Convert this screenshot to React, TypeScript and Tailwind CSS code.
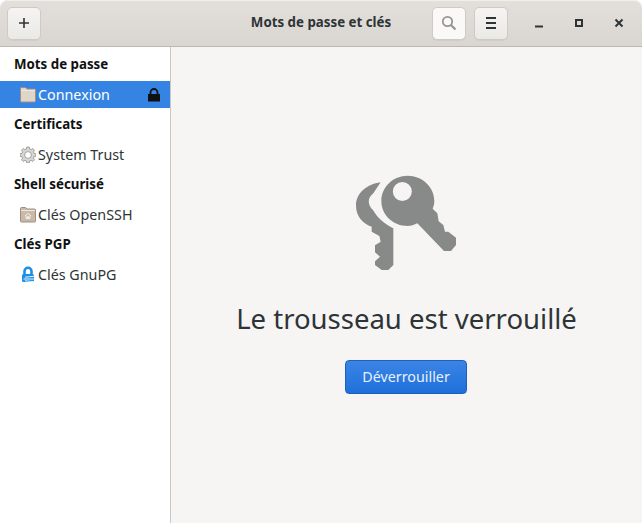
import React from 'react';

const FONT = "font-['Noto_Sans',sans-serif]";

const FolderIcon: React.FC<{ home?: boolean; dark?: boolean }> = ({ home, dark }) => (
  <svg width="16" height="17" viewBox="0 0 16 17" className="shrink-0">
    <path d="M.5 2.500a1 1 0 0 1 1-1h4l1.500 1.500h7.500a1 1 0 0 1 1 1v11a1 1 0 0 1-1 1h-13a1 1 0 0 1-1-1z" fill={dark ? '#c9b9a8' : '#dfd5c9'} stroke="#a08f80" />
    <path d="M1 4.500h14" stroke="#f0e9e0" strokeWidth="1" />
    {home && <path d="M5 10l3-2.600L11 10M6 9.500v3h4v-3M7.500 12.500v-2h1v2" fill="none" stroke="#f3eee8" strokeWidth="1" />}
  </svg>
);

const GearIcon = () => (
  <svg width="16" height="17" viewBox="0 0 16 17" className="shrink-0">
    <path
      d="M6.800 1h2.400l.4 2 1.500.6 1.700-1.100 1.700 1.700-1.100 1.700.6 1.500 2 .4v2.400l-2 .4-.6 1.500 1.100 1.700-1.700 1.700-1.700-1.100-1.500.6-.4 2H6.800l-.4-2-1.500-.6-1.700 1.100-1.700-1.700 1.100-1.700-.6-1.500-2-.4V7.800l2-.4.6-1.500-1.100-1.700 1.700-1.700 1.700 1.100 1.500-.6z"
      fill="#d6d6d3"
      stroke="#8f8f8c"
      strokeWidth="0.8"
      strokeLinejoin="round"
    />
    <circle cx="8" cy="9" r="3.400" fill="#fff" stroke="#8f8f8c" strokeWidth="0.8" />
  </svg>
);

const GpgIcon = () => (
  <svg width="16" height="17" viewBox="0 0 16 17" className="shrink-0">
    <path d="M4.500 8V5.300a3.500 3.500 0 0 1 7 0V8" fill="none" stroke="#1c8ee6" strokeWidth="2.600" />
    <path d="M2 9.500a1.500 1.500 0 0 1 1.500-1.500h9a1.500 1.500 0 0 1 1.500 1.500v5a1.500 1.500 0 0 1-1.500 1.500h-9a1.500 1.500 0 0 1-1.500-1.500z" fill="#1c8ee6" />
    <path d="M5 11.200l10-1M3.500 13h11.500M5 14.800l10 1" stroke="#fff" strokeWidth="0.9" />
  </svg>
);

const LockIcon = () => (
  <svg width="14" height="14" viewBox="0 0 14 14" className="shrink-0">
    <path d="M3.500 6.500V4.500a3.500 3.500 0 0 1 7 0v2" fill="none" stroke="#111" strokeWidth="1.800" />
    <rect x="1" y="6" width="12" height="7.500" fill="#111" />
  </svg>
);

const KeysIcon = () => (
  <svg width="130" height="115" viewBox="0 0 390 345" className="shrink-0 mr-[4px]">
    <path
      d="M122 52C80 58 48 85 48 122C48 155 70 176 95 185L95 200L118 213L122 230L105 241L105 262L120 275L105 289L105 300L125 315L145 315L160 300L160 190C132 176 112 158 99 135C84 122 80 100 100 85Z"
      fill="#888a8a"
    />
    <path
      fillRule="evenodd"
      d="M203 32C247 32 283 66 283 108C283 116 281 124 278 131L292 145L296 169L310 180L315 200L325 200L348 218L348 240L333 258L312 258L232 175C223 180 213 183 203 183C159 183 124 150 124 108C124 66 159 32 203 32ZM187 51A28.500 28.500 0 1 0 187 108A28.500 28.500 0 1 0 187 51Z"
      fill="#888a8a"
    />
  </svg>
);

const HeaderButton: React.FC<{ children: React.ReactNode; light?: boolean; className?: string }> = ({ children, light, className }) => (
  <button
    className={`w-[34px] h-[33px] flex items-center justify-center rounded-[5px] border border-[#cfcac4] shadow-[0_1px_0_#d2cdc8] ${
      light ? 'bg-[#faf9f8]' : 'bg-gradient-to-b from-[#f5f4f2] to-[#ebe9e6]'
    } ${className ?? ''}`}
  >
    {children}
  </button>
);

const SectionTitle: React.FC<{ label: string }> = ({ label }) => (
  <div className="h-[30px] flex items-center pl-[14px] text-[13.300px] font-bold text-[#111]">{label}</div>
);

const Row: React.FC<{ icon: React.ReactNode; label: string; selected?: boolean; right?: React.ReactNode }> = ({ icon, label, selected, right }) => (
  <div className="h-[30px] pt-[1px]">
    <div className={`h-[27px] flex items-center pl-[20px] pr-[9px] gap-[2px] text-[14.300px] ${selected ? 'bg-[#3584e4] text-white' : 'text-[#2e3436]'}`}>
      {icon}
      <span className="flex-1">{label}</span>
      {right}
    </div>
  </div>
);

export default function App() {
  return (
    <div className={`${FONT} w-[642px] h-[523px] flex flex-col bg-white overflow-hidden`}>
      <header className="h-[47px] shrink-0 grid grid-cols-[1fr_auto_1fr] items-center pl-[7px] pr-[3px] rounded-t-[8px] bg-gradient-to-b from-[#e3e0dc] to-[#d9d6d1] border-b border-[#bfb8b0] shadow-[inset_0_1px_0_#f1efec]">
        <div className="flex">
          <HeaderButton>
            <svg width="14" height="14" viewBox="0 0 14 14">
              <path d="M7 2v10M2 7h10" stroke="#2e3436" strokeWidth="1.600" />
            </svg>
          </HeaderButton>
        </div>
        <div className="mr-[4px] text-[13.300px] font-bold text-[#2e3436]">Mots de passe et clés</div>
        <div className="flex items-center justify-end">
          <HeaderButton light className="mr-2">
            <svg width="16" height="16" viewBox="0 0 16 16" fill="none" stroke="#969594" strokeWidth="1.800">
              <circle cx="6.500" cy="6.500" r="4.700" />
              <path d="M10 10l4.500 4.500" strokeWidth="2.200" />
            </svg>
          </HeaderButton>
          <HeaderButton>
            <svg width="12" height="12" viewBox="0 0 12 12" stroke="#2e3436" strokeWidth="2">
              <path d="M1 1h10M1 6h10M1 11h10" />
            </svg>
          </HeaderButton>
          <div className="flex items-center">
            <button className="w-[40px] ml-[11px] flex justify-center">
              <svg width="10" height="10" viewBox="0 0 10 10">
                <path d="M1 8.500h8" stroke="#2e3436" strokeWidth="2" />
              </svg>
            </button>
            <button className="w-[40px] flex justify-center">
              <svg width="10" height="10" viewBox="0 0 10 10" fill="none">
                <rect x="2" y="2" width="6" height="6" stroke="#2e3436" strokeWidth="2" />
              </svg>
            </button>
            <button className="w-[40px] flex justify-center">
              <svg width="10" height="10" viewBox="0 0 10 10">
                <path d="M1.500 1.500l7 7M8.500 1.500l-7 7" stroke="#2e3436" strokeWidth="2" />
              </svg>
            </button>
          </div>
        </div>
      </header>
      <div className="flex-1 flex min-h-0">
        <aside className="w-[171px] shrink-0 bg-white border-r border-[#cdc7c2] pt-[3px]">
          <SectionTitle label="Mots de passe" />
          <Row icon={<FolderIcon />} label="Connexion" selected right={<LockIcon />} />
          <SectionTitle label="Certificats" />
          <Row icon={<GearIcon />} label="System Trust" />
          <SectionTitle label="Shell sécurisé" />
          <Row icon={<FolderIcon home dark />} label="Clés OpenSSH" />
          <SectionTitle label="Clés PGP" />
          <Row icon={<GpgIcon />} label="Clés GnuPG" />
        </aside>
        <main className="flex-1 bg-[#f6f5f4] flex flex-col items-center pt-[118px]">
          <KeysIcon />
          <h1 className="mt-[19px] text-[27.500px] leading-[40px] font-normal text-[#2e3436]">Le trousseau est verrouillé</h1>
          <button className="mt-[21px] mr-[1px] w-[122px] h-[34px] rounded-[4px] border border-[#1b62c0] bg-gradient-to-b from-[#3a85e5] to-[#1f6fdb] text-[14.300px] text-[#e8f0fb] flex items-center justify-center">
            Déverrouiller
          </button>
        </main>
      </div>
    </div>
  );
}
